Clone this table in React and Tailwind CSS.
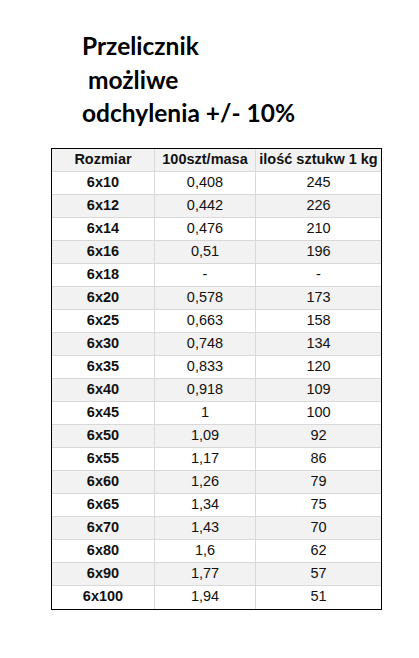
import React from "react";

const rows = [
  ["6x10", "0,408", "245"],
  ["6x12", "0,442", "226"],
  ["6x14", "0,476", "210"],
  ["6x16", "0,51", "196"],
  ["6x18", "-", "-"],
  ["6x20", "0,578", "173"],
  ["6x25", "0,663", "158"],
  ["6x30", "0,748", "134"],
  ["6x35", "0,833", "120"],
  ["6x40", "0,918", "109"],
  ["6x45", "1", "100"],
  ["6x50", "1,09", "92"],
  ["6x55", "1,17", "86"],
  ["6x60", "1,26", "79"],
  ["6x65", "1,34", "75"],
  ["6x70", "1,43", "70"],
  ["6x80", "1,6", "62"],
  ["6x90", "1,77", "57"],
  ["6x100", "1,94", "51"],
];

function Row({ cells, gray, header, last }) {
  return (
    <div
      className={`grid grid-cols-[103px_101px_125px] h-[23px] ${
        last ? "" : "border-b border-[#d9d9d9]"
      } ${gray ? "bg-[#f2f2f2]" : "bg-white"}`}
    >
      {cells.map((c, i) => (
        <div
          key={i}
          className={`flex items-center justify-center whitespace-nowrap ${
            i < 2 ? "border-r border-[#d9d9d9]" : ""
          } ${header || i === 0 ? "font-bold" : "font-normal"}`}
        >
          {c}
        </div>
      ))}
    </div>
  );
}

export default function App() {
  return (
    <div className="w-[419px] h-[658px] bg-white overflow-hidden">
      <div className="pt-[29px] pl-[82px] font-['Lato',sans-serif] font-bold text-[24.5px] leading-[33.5px] text-black">
        <div>Przelicznik</div>
        <div className="whitespace-pre"> możliwe</div>
        <div>odchylenia +/- 10%</div>
      </div>
      <div className="mt-[18px] ml-[51px] w-[331px] border border-black font-['Liberation_Sans',Arial,sans-serif] text-[14.5px] text-[#111]">
        <Row cells={["Rozmiar", "100szt/masa", "ilość sztukw 1 kg"]} gray header />
        {rows.map((r, i) => (
          <Row key={r[0]} cells={r} gray={i % 2 === 1} last={i === rows.length - 1} />
        ))}
      </div>
    </div>
  );
}
